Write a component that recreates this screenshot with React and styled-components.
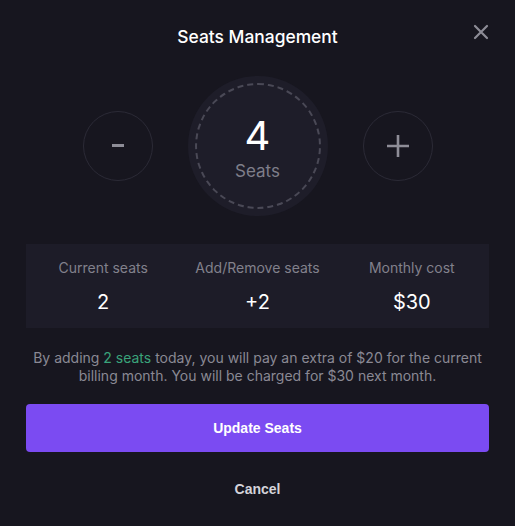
import React from "react";
import styled, { createGlobalStyle } from "styled-components";

const Global = createGlobalStyle`
  html, body { margin: 0; padding: 0; background: #17161f; }
  body { font-family: Inter, "Noto Sans", sans-serif; }
`;

const Modal = styled.div`
  width: 515px;
  height: 526px;
  box-sizing: border-box;
  background: #17161f;
  padding: 24px 26px 0;
  position: relative;
  display: flex;
  flex-direction: column;
`;

const Title = styled.h2`
  margin: 0;
  text-align: center;
  font-size: 17.4px;
  font-weight: 500;
  color: #ffffff;
  line-height: 26px;
`;

const Close = styled.button`
  position: absolute;
  top: 22px;
  right: 24px;
  width: 20px;
  height: 20px;
  padding: 0;
  border: none;
  background: none;
  color: #8d8c96;
  display: flex;
  align-items: center;
  justify-content: center;
`;

const Stepper = styled.div`
  display: flex;
  align-items: center;
  justify-content: center;
  gap: 35px;
  margin-top: 26px;
`;

const RoundButton = styled.button`
  width: 70px;
  height: 70px;
  border-radius: 50%;
  border: 1px solid #2b2a36;
  background: transparent;
  color: #8e8d97;
  font-family: Inter, sans-serif;
  padding: 0;
  display: flex;
  align-items: center;
  justify-content: center;
  box-sizing: border-box;
`;

const Counter = styled.div`
  width: 140px;
  height: 140px;
  border-radius: 50%;
  background: #1e1d29;
  display: flex;
  align-items: center;
  justify-content: center;
`;

const Dashed = styled.div`
  width: 126px;
  height: 126px;
  box-sizing: border-box;
  border-radius: 50%;
  border: 2px dashed #4a4956;
  display: flex;
  flex-direction: column;
  align-items: center;
  justify-content: center;
`;

const Count = styled.div`
  font-size: 40px;
  line-height: 44px;
  color: #ffffff;
  margin-top: 4px;
`;

const CountLabel = styled.div`
  font-size: 17px;
  color: #7f7e89;
  line-height: 22px;
  margin-top: 2px;
`;

const Stats = styled.div`
  margin-top: 28px;
  height: 84px;
  background: #1d1c28;
  display: grid;
  grid-template-columns: repeat(3, 1fr);
  align-items: center;
`;

const Stat = styled.div`
  display: flex;
  flex-direction: column;
  align-items: center;
  gap: 13px;
`;

const StatLabel = styled.div`
  font-size: 14px;
  color: #82818c;
  line-height: 18px;
`;

const StatValue = styled.div`
  font-size: 20px;
  color: #ffffff;
  line-height: 24px;
`;

const Note = styled.p`
  margin: 21px 0 0;
  text-align: center;
  font-size: 14px;
  line-height: 18px;
  color: #8a8994;
`;

const Highlight = styled.span`
  color: #3aa37a;
`;

const Primary = styled.button`
  margin-top: 19px;
  height: 48px;
  border: none;
  border-radius: 4px;
  background: #7b4bf2;
  color: #ffffff;
  font-family: "Liberation Sans", Arial, sans-serif;
  font-weight: 700;
  font-size: 14px;
`;

const Secondary = styled.button`
  margin-top: 24px;
  height: 26px;
  border: none;
  background: transparent;
  color: #d4d3da;
  font-family: "Liberation Sans", Arial, sans-serif;
  font-weight: 700;
  font-size: 14px;
  align-self: center;
`;

export default function App() {
  return (
    <>
      <Global />
      <Modal>
        <Title>Seats Management</Title>
        <Close aria-label="Close">
          <svg width="16" height="16" viewBox="0 0 16 16">
            <path d="M2 2L14 14M14 2L2 14" stroke="currentColor" strokeWidth="2.2" strokeLinecap="round" />
          </svg>
        </Close>
        <Stepper>
          <RoundButton>
            <svg width="12" height="4" viewBox="0 0 12 4"><rect x="0" y="0" width="12" height="3" fill="currentColor" /></svg>
          </RoundButton>
          <Counter>
            <Dashed>
              <Count>4</Count>
              <CountLabel>Seats</CountLabel>
            </Dashed>
          </Counter>
          <RoundButton>
            <svg width="24" height="24" viewBox="0 0 24 24"><path d="M12 1V23M1 12H23" stroke="currentColor" strokeWidth="2.6" /></svg>
          </RoundButton>
        </Stepper>
        <Stats>
          <Stat>
            <StatLabel>Current seats</StatLabel>
            <StatValue>2</StatValue>
          </Stat>
          <Stat>
            <StatLabel>Add/Remove seats</StatLabel>
            <StatValue>+2</StatValue>
          </Stat>
          <Stat>
            <StatLabel>Monthly cost</StatLabel>
            <StatValue>$30</StatValue>
          </Stat>
        </Stats>
        <Note>
          By adding <Highlight>2 seats</Highlight> today, you will pay an extra of $20 for the current billing month. You will be charged for $30 next month.
        </Note>
        <Primary>Update Seats</Primary>
        <Secondary>Cancel</Secondary>
      </Modal>
    </>
  );
}
